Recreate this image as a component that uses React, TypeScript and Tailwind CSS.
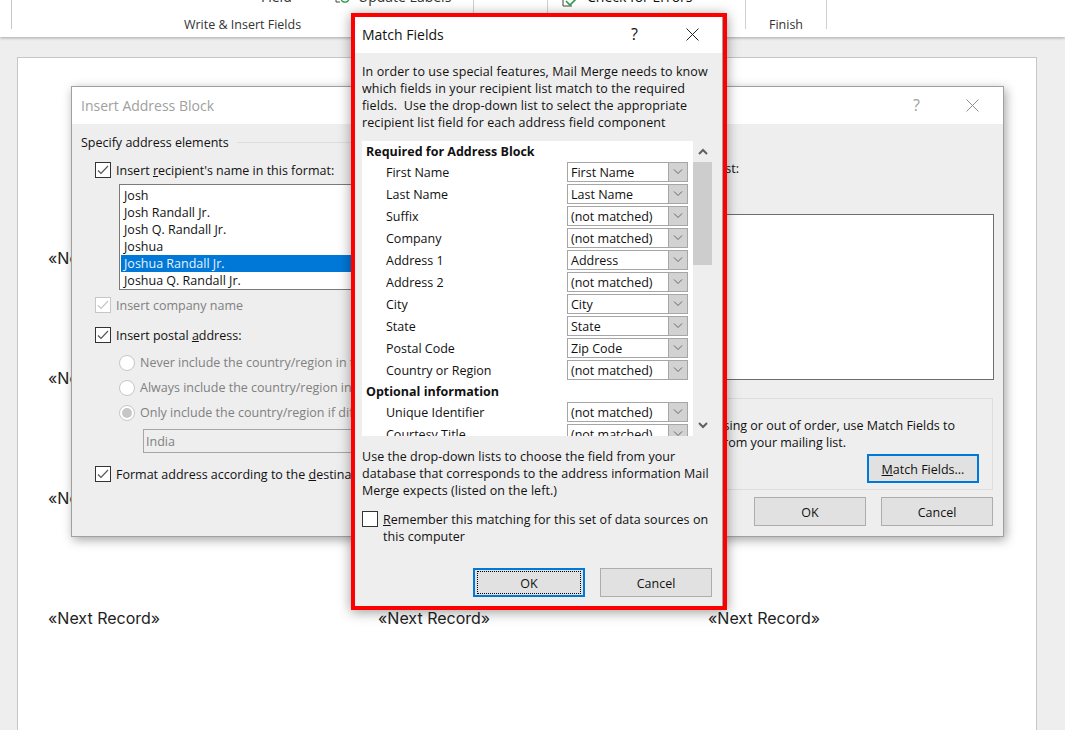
import React from 'react'

const fieldRows = [
  ['First Name', 'First Name'],
  ['Last Name', 'Last Name'],
  ['Suffix', '(not matched)'],
  ['Company', '(not matched)'],
  ['Address 1', 'Address'],
  ['Address 2', '(not matched)'],
  ['City', 'City'],
  ['State', 'State'],
  ['Postal Code', 'Zip Code'],
  ['Country or Region', '(not matched)'],
]

const optionalRows = [
  ['Unique Identifier', '(not matched)'],
  ['Courtesy Title', '(not matched)'],
]

const nameFormats = ['Josh', 'Josh Randall Jr.', 'Josh Q. Randall Jr.', 'Joshua', 'Joshua Randall Jr.', 'Joshua Q. Randall Jr.']

const CloseIcon = ({ color }: { color: string }) => (
  <svg width="13" height="13" viewBox="0 0 13 13" fill="none" stroke={color} strokeWidth="1">
    <path d="M0.5 0.5L12.5 12.5M12.5 0.5L0.5 12.5" />
  </svg>
)

const Check = ({ on = true, disabled = false }: { on?: boolean; disabled?: boolean }) => (
  <span className={`-mt-[2px] flex h-4 w-4 shrink-0 items-center justify-center border bg-white ${disabled ? 'border-[#c6c6c6]' : 'border-[#333333]'}`}>
    {on && (
      <svg width="12" height="10" viewBox="0 0 12 10" fill="none" stroke={disabled ? '#c6c6c6' : '#555555'} strokeWidth="1.2">
        <path d="M1 5.5L4 8.5L11 1" />
      </svg>
    )}
  </span>
)

const Radio = ({ on = false, label }: { on?: boolean; label: string }) => (
  <div className="flex h-[25px] items-center gap-[5px] whitespace-nowrap text-[#808080]">
    <span className="flex h-4 w-4 shrink-0 items-center justify-center rounded-full border border-[#c6c6c6] bg-white">
      {on && <span className="h-[10px] w-[10px] rounded-full bg-[#c6c6c6]" />}
    </span>
    {label}
  </div>
)

const Combo = ({ value }: { value: string }) => (
  <div className="box-border flex h-5 w-[121px] items-center border-[1.5px] border-[#a6a6a6] bg-white">
    <span className="flex-1 pl-[3px] pt-[2px] leading-none text-[#111111]">{value}</span>
    <span className="flex h-full w-[19px] items-center justify-center border-l border-[#a6a6a6] bg-[#d2d2d2]">
      <svg width="10" height="6" viewBox="0 0 10 6" fill="none" stroke="#666666" strokeWidth="1">
        <path d="M1 0.5L5 4.5L9 0.5" />
      </svg>
    </span>
  </div>
)

const FieldRow = ({ label, value }: { label: string; value: string }) => (
  <div className="flex h-[22px] items-center justify-between pl-6 pr-[5px]">
    <span>{label}</span>
    <Combo value={value} />
  </div>
)

const DlgButton = ({ children, focus = false, dotted = false }: { children: React.ReactNode; focus?: boolean; dotted?: boolean }) => (
  <div className={`box-border flex h-[29px] w-28 items-center justify-center bg-[#e1e1e1] ${focus ? 'border-2 border-[#0078d7]' : 'border border-[#adadad]'}`}>
    <span className={`flex items-center justify-center pt-px ${dotted ? 'h-[23px] w-[104px] border border-dotted border-black' : ''}`}>{children}</span>
  </div>
)

export default function App() {
  return (
    <div className="relative h-[730px] w-[1065px] overflow-hidden bg-[#eeeeee] font-['Open_Sans',sans-serif] text-[12.5px] leading-[17px] text-[#111111]">
      {/* Ribbon */}
      <div className="relative z-10 flex h-[37px] bg-white shadow-[0_1px_3px_rgba(0,0,0,0.3)]">
        <div className="h-[29px] w-3 border-r border-[#c6c6c6]" />
        <div className="relative flex h-[29px] w-[462px] justify-center border-r border-[#d0d0d0] text-[#333333]">
          <span className="absolute left-[249px] top-[-12px] text-[14px]">Field</span>
          <svg className="absolute left-[323px] top-[-6px]" width="18" height="12" viewBox="0 0 18 12" fill="none">
            <path d="M1 0V8H5" stroke="#444444" />
            <path d="M6 3A4 4 0 0 0 14 5M14 1V5H10" stroke="#2a9d4a" strokeWidth="1.4" />
          </svg>
          <span className="absolute left-[346px] top-[-12px] whitespace-nowrap text-[14px]">Update Labels</span>
          <span className="absolute top-[16px] whitespace-nowrap">Write &amp; Insert Fields</span>
        </div>
        <div className="h-[29px] w-[74px] border-r border-[#d0d0d0]" />
        <div className="relative h-[29px] w-[198px] border-r border-[#d0d0d0]">
          <svg className="absolute left-[14px] top-[-3px]" width="18" height="12" viewBox="0 0 18 12" fill="none">
            <path d="M1 0V9H10" stroke="#444444" />
            <path d="M4 4L8 8L15 1" stroke="#2a9d4a" strokeWidth="1.6" />
          </svg>
          <span className="absolute left-[39px] top-[-12px] whitespace-nowrap text-[14px]">Check for Errors</span>
        </div>
        <div className="relative flex h-[29px] w-[81px] justify-center border-r border-[#d0d0d0]">
          <span className="absolute top-[16px] text-[#333333]">Finish</span>
        </div>
      </div>

      {/* Document page */}
      <div className="ml-[17px] mt-5 h-[700px] w-[1020px] border border-[#c6c6c6] bg-white pl-[30px] pt-[188px] font-['Inter',sans-serif] text-[16px] leading-[24px] text-[#222222]">
        <div className="grid grid-cols-[330px_330px_330px] auto-rows-[120px]">
          {Array.from({ length: 12 }).map((_, i) => (
            <span key={i}>{i % 3 === 0 || i >= 9 ? '«Next Record»' : ''}</span>
          ))}
        </div>
      </div>

      {/* Insert Address Block dialog */}
      <div className="absolute left-[71px] top-[86px] z-20 box-border flex h-[451px] w-[933px] flex-col border border-[#a0a0a0] bg-[#eeeeee] shadow-[2px_3px_10px_rgba(0,0,0,0.35)]">
        <div className="flex h-[37px] items-center bg-white pl-[9px] pr-6 text-[14px] text-[#a0a0a0]">
          <span className="flex-1">Insert Address Block</span>
          <span className="mr-[46px] text-[16px]">?</span>
          <CloseIcon color="#909090" />
        </div>
        <div className="flex flex-1 justify-between pl-[9px] pr-[9px]">
          <div className="w-[440px] pt-[10px]">
            <div className="flex items-center gap-2 whitespace-nowrap">
              <span>Specify address elements</span>
              <span className="h-px flex-1 bg-[#dddddd]" />
            </div>
            <div className="ml-[14px] mt-[11px] flex items-center gap-[5px]">
              <Check />
              <span>Insert <u>r</u>ecipient's name in this format:</span>
            </div>
            <div className="ml-[38px] mt-[5px] h-[106px] w-[320px] border border-[#7a7a7a] bg-white pt-[2px]">
              {nameFormats.map((name) => (
                <div key={name} className={`whitespace-nowrap ${name === 'Joshua Randall Jr.' ? 'ml-px bg-[#0078d7] pl-[3px] text-[#e8f2fb]' : 'pl-[4px]'}`}>{name}</div>
              ))}
            </div>
            <div className="ml-[14px] mt-[7px] flex items-center gap-[5px] text-[#808080]">
              <Check disabled />
              <span>Insert company name</span>
            </div>
            <div className="ml-[14px] mt-[13px] flex items-center gap-[5px]">
              <Check />
              <span>Insert postal <u>a</u>ddress:</span>
            </div>
            <div className="ml-[38px] mt-[6px]">
              <Radio label="Never include the country/region in the address" />
              <Radio label="Always include the country/region in the address" />
              <Radio on label="Only include the country/region if different than:" />
            </div>
            <div className="ml-[62px] mt-[4px] flex h-[24px] w-[300px] items-center border border-[#a6a6a6] pl-[2px] text-[#808080]">India</div>
            <div className="ml-[14px] mt-[13px] flex items-center gap-[5px] whitespace-nowrap">
              <Check />
              <span>Format address according to the <u>d</u>estination country/region</span>
            </div>
          </div>
          <div className="flex w-[430px] flex-col pt-[36px]">
            <div className="mr-[255px] flex justify-end whitespace-nowrap">Here is a preview from your recipient list:</div>
            <div className="mt-[37px] h-[166px] border border-[#6d6d6d] bg-white" />
            <div className="mr-px mt-[18px] h-[92px] border border-[#dddddd] pr-[13px] pt-[18px]">
              <div className="mr-[24px] flex justify-end whitespace-nowrap">If items in your address block are missing or out of order, use Match Fields to</div>
              <div className="mr-[133px] flex justify-end whitespace-nowrap">identify the correct address elements from your mailing list.</div>
              <div className="mt-[3px] flex justify-end">
                <DlgButton focus><span><u>M</u>atch Fields...</span></DlgButton>
              </div>
            </div>
            <div className="mr-px mt-[7px] flex justify-end gap-[15px]">
              <DlgButton>OK</DlgButton>
              <DlgButton>Cancel</DlgButton>
            </div>
          </div>
        </div>
      </div>

      {/* Match Fields dialog, red outline is the annotation from the article */}
      <div className="absolute left-[351px] top-[13px] z-30 box-border flex h-[597px] w-[376px] flex-col border-4 border-[#ff0000] bg-[#eeeeee] shadow-[0_2px_12px_rgba(0,0,0,0.4)]">
        <div className="flex h-9 shrink-0 items-center border-r border-[#a0a0a0] bg-white pb-[2px] pl-[7px] pr-[23px] text-[14px]">
          <span className="flex-1">Match Fields</span>
          <span className="mr-[48px] text-[16px]">?</span>
          <CloseIcon color="#222222" />
        </div>
        <div className="flex-1 border-r border-[#a0a0a0] pl-[7px] pr-[10px] pt-[10px]">
          <p className="whitespace-nowrap tracking-[0.09px]">
            In order to use special features, Mail Merge needs to know<br />
            which fields in your recipient list match to the required<br />
            fields.&nbsp; Use the drop-down list to select the appropriate<br />
            recipient list field for each address field component
          </p>
          <div className="mt-[10px] flex h-[295px]">
            <div className="w-[331px] shrink-0 overflow-hidden bg-white">
              <div className="flex h-5 items-center pl-1 font-bold">Required for Address Block</div>
              {fieldRows.map(([label, value]) => (
                <FieldRow key={label} label={label} value={value} />
              ))}
              <div className="flex h-5 items-center pl-1 font-bold">Optional information</div>
              {optionalRows.map(([label, value]) => (
                <FieldRow key={label} label={label} value={value} />
              ))}
            </div>
            <div className="flex w-[19px] shrink-0 flex-col items-center">
              <svg className="mt-[7px]" width="10" height="7" viewBox="0 0 10 7" fill="none" stroke="#606060" strokeWidth="2">
                <path d="M1 6L5 2L9 6" />
              </svg>
              <div className="mt-[7px] h-[103px] w-full bg-[#cdcdcd]" />
              <svg className="mt-[157px]" width="10" height="7" viewBox="0 0 10 7" fill="none" stroke="#606060" strokeWidth="2">
                <path d="M1 1L5 5L9 1" />
              </svg>
            </div>
          </div>
          <p className="mt-3 whitespace-nowrap tracking-[0.05px]">
            Use the drop-down lists to choose the field from your<br />
            database that corresponds to the address information Mail<br />
            Merge expects (listed on the left.)
          </p>
          <div className="mt-3 flex gap-[5px]">
            <span className="mt-[2px]"><Check on={false} /></span>
            <p className="whitespace-nowrap tracking-[0.04px]">
              <u>R</u>emember this matching for this set of data sources on<br />
              this computer
            </p>
          </div>
          <div className="mt-[23px] flex justify-end gap-[15px]">
            <DlgButton focus dotted>OK</DlgButton>
            <DlgButton>Cancel</DlgButton>
          </div>
        </div>
      </div>
    </div>
  )
}
